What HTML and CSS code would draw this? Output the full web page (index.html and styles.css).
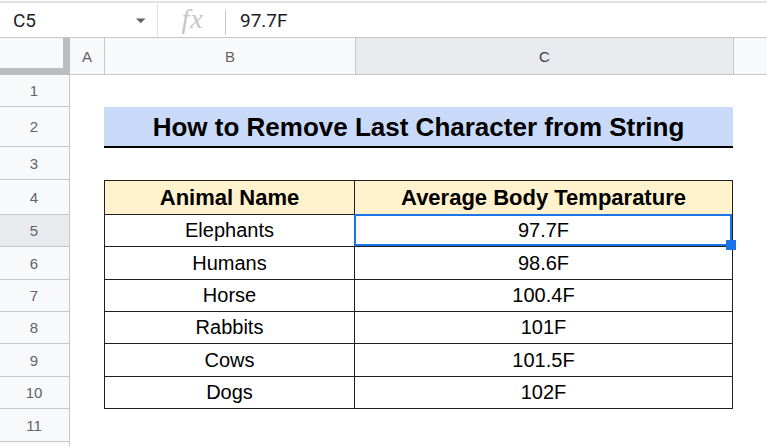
FILE: index.html
```html
<!DOCTYPE html>
<html lang="en">
<head>
<meta charset="utf-8">
<title>Sheet</title>
<link rel="stylesheet" href="styles.css">
</head>
<body>
<div class="app">
  <div class="fbar">
    <div class="namebox">
      <span class="ref">C5</span>
      <svg class="caret" width="10" height="6" viewBox="0 0 10 6"><path d="M0 0.5 L9.5 0.5 L4.75 5.2 Z" fill="#5f6368"/></svg>
    </div>
    <div class="fx"><span>fx</span></div>
    <div class="fsep"></div>
    <div class="fval">97.7F</div>
  </div>

  <div class="sheet">
    <div class="corner"></div>
    <div class="ch ch-a">A</div>
    <div class="ch">B</div>
    <div class="ch ch-sel">C</div>
    <div class="ch ch-d"></div>

    <div class="rh r1">1</div>
    <div class="rh r2">2</div>
    <div class="rh r3">3</div>
    <div class="rh r4">4</div>
    <div class="rh r5 rh-sel">5</div>
    <div class="rh r6">6</div>
    <div class="rh r7">7</div>
    <div class="rh r8">8</div>
    <div class="rh r9">9</div>
    <div class="rh r10">10</div>
    <div class="rh r11">11</div>
    <div class="rh r12"></div>

    <div class="title r2">How to Remove Last Character from String</div>

    <div class="cell colb r4 head first">Animal Name</div>
    <div class="cell colc r4 head first">Average Body Temparature</div>

    <div class="cell colb r5">Elephants</div>
    <div class="cell colc r5 selected">97.7F</div>

    <div class="cell colb r6">Humans</div>
    <div class="cell colc r6">98.6F</div>

    <div class="cell colb r7">Horse</div>
    <div class="cell colc r7">100.4F</div>

    <div class="cell colb r8">Rabbits</div>
    <div class="cell colc r8">101F</div>

    <div class="cell colb r9">Cows</div>
    <div class="cell colc r9">101.5F</div>

    <div class="cell colb r10">Dogs</div>
    <div class="cell colc r10">102F</div>
  </div>
</div>
</body>
</html>
```

FILE: styles.css
```css
* { box-sizing: border-box; }

html, body {
  margin: 0;
  padding: 0;
  width: 767px;
  height: 446px;
  overflow: hidden;
  background: #ffffff;
}

.app {
  font-family: "Liberation Sans", Arial, sans-serif;
  color: #000;
}

/* ---------- formula bar ---------- */
.fbar {
  margin-top: 1px;
  height: 37px;
  border-top: 2px solid #e3e3e3;
  border-bottom: 1px solid #c7c7c7;
  display: flex;
  align-items: stretch;
}

.namebox {
  width: 158px;
  border-right: 1px solid #e3e3e3;
  display: flex;
  align-items: center;
  justify-content: space-between;
  padding: 0 11px 0 13px;
}

.ref {
  font-family: Roboto, "Liberation Sans", sans-serif;
  font-size: 19px;
  color: #202124;
}

.caret {
  display: block;
  margin-top: 1px;
}

.fx {
  width: 67px;
  display: flex;
  align-items: center;
  justify-content: center;
}

.fx span {
  font-family: "Liberation Serif", "DejaVu Serif", serif;
  font-style: italic;
  font-size: 28px;
  letter-spacing: 1px;
  color: #c4c7c5;
  margin-left: 2px;
  margin-top: -2px;
}

.fsep {
  width: 1px;
  background: #c7c7c7;
  margin: 7px 0 2px;
}

.fval {
  display: flex;
  align-items: center;
  padding-left: 14px;
  font-family: Roboto, "Liberation Sans", sans-serif;
  font-size: 19px;
  color: #202124;
}

/* ---------- sheet grid ---------- */
.sheet {
  display: grid;
  grid-template-columns: 70px 34px 251px 378px 1fr;
  grid-template-rows: 37px 32px 40px 33px 35px 32px 33px 32px 32px 33px 32px 33px 4px;
  height: 408px;
  overflow: hidden;
}

.corner {
  grid-row: 1;
  grid-column: 1;
  background: #f8f9fa;
  border-right: 7px solid #bdbdbd;
  border-bottom: 7px solid #bdbdbd;
  box-shadow: 0 1px 0 #d0d0d0;
}

.ch {
  grid-row: 1;
  background: #f8f9fa;
  border-left: 1px solid #c7c7c7;
  border-bottom: 1px solid #c7c7c7;
  display: flex;
  align-items: center;
  justify-content: center;
  font-size: 15px;
  color: #5f6368;
}

.ch-a { border-left: none; }

.ch-sel {
  background: #e8eaed;
  color: #3c4043;
}

.rh {
  grid-column: 1;
  background: #f8f9fa;
  border-right: 1px solid #c7c7c7;
  border-bottom: 1px solid #c7c7c7;
  display: flex;
  align-items: center;
  justify-content: center;
  padding-right: 1px;
  font-size: 15px;
  color: #5f6368;
}

.rh-sel { background: #e8eaed; }

.r12 { border-bottom: none; }

.r1 { grid-row: 2; }
.r2 { grid-row: 3; }
.r3 { grid-row: 4; }
.r4 { grid-row: 5; }
.r5 { grid-row: 6; }
.r6 { grid-row: 7; }
.r7 { grid-row: 8; }
.r8 { grid-row: 9; }
.r9 { grid-row: 10; }
.r10 { grid-row: 11; }
.r11 { grid-row: 12; }
.r12 { grid-row: 13; }

/* ---------- title ---------- */
.title {
  grid-column: 3 / 5;
  background: #c9daf8;
  border-bottom: 2px solid #000;
  display: flex;
  align-items: center;
  justify-content: center;
  font-weight: 700;
  font-size: 26px;
  padding-top: 1px;
  margin-bottom: -1px;
}

/* ---------- table ---------- */
.cell {
  display: flex;
  align-items: center;
  justify-content: center;
  font-size: 20px;
  border-right: 1px solid #1f1f1f;
  border-bottom: 1px solid #1f1f1f;
  color: #000;
}

.colb {
  grid-column: 3;
  border-left: 1px solid #1f1f1f;
}

.colc { grid-column: 4; }

.head {
  background: #fff2cc;
  font-weight: 700;
  font-size: 22px;
}

.first { border-top: 1px solid #1f1f1f; }

.selected { position: relative; }

.selected::after {
  content: "";
  position: absolute;
  top: -1px;
  left: -1px;
  right: 0;
  bottom: 0;
  border: 2px solid #1a73e8;
}

.selected::before {
  content: "";
  position: absolute;
  right: -4px;
  bottom: -4px;
  width: 10px;
  height: 10px;
  background: #1a73e8;
  z-index: 1;
}
```
